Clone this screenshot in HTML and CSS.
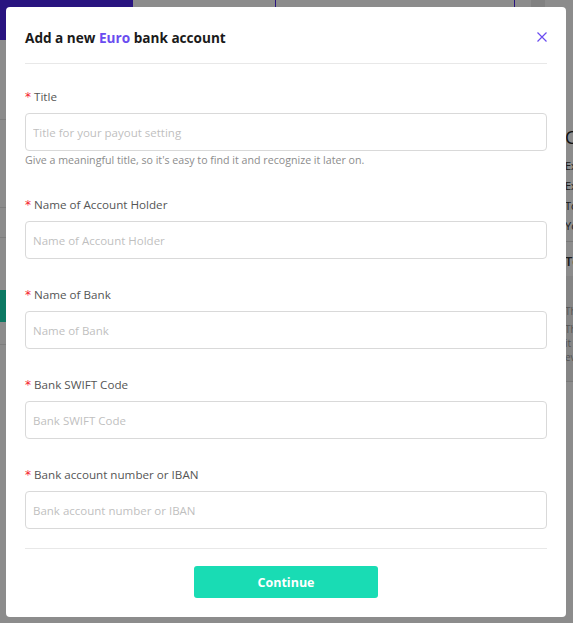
FILE: index.html
```html
<!DOCTYPE html>
<html>
<head>
<meta charset="utf-8">
<link rel="stylesheet" href="styles.css">
</head>
<body>
<div class="page">
  <div class="topbar">
    <div class="brand"></div>
    <div class="tab"></div>
    <div class="tab2"></div>
  </div>
  <div class="left">
    <div class="row r1"></div>
    <div class="row r2"></div>
    <div class="row r3"></div>
    <div class="greenbtn"></div>
    <div class="row r4"></div>
  </div>
  <div class="right">
    <div class="card">
      <div class="h">Co</div>
      <div class="list">
        <div class="t">Ex</div>
        <div class="t">Ex</div>
        <div class="t">To</div>
        <div class="t">Yo</div>
      </div>
      <div class="sep"></div>
      <div class="hb">To</div>
    </div>
    <div class="note">
      <div class="t">Th</div>
      <div class="t sm">Th</div>
      <div class="t sm">it</div>
      <div class="t sm">ev</div>
    </div>
  </div>
</div>
<div class="overlay"></div>
<div class="modal">
  <div class="modal-header">
    <h2 class="modal-title">Add a new <span class="accent">Euro</span> bank account</h2>
    <svg class="close" width="10" height="10" viewBox="0 0 10 10"><path d="M0.5 0.5L9.5 9.5M9.5 0.5L0.5 9.5" stroke="#6a4cf0" stroke-width="1.2" fill="none"/></svg>
  </div>
  <div class="modal-body">
    <div class="field">
      <label class="label"><span class="req">*</span>Title</label>
      <input class="input" placeholder="Title for your payout setting">
      <div class="help">Give a meaningful title, so it's easy to find it and recognize it later on.</div>
    </div>
    <div class="field">
      <label class="label"><span class="req">*</span>Name of Account Holder</label>
      <input class="input" placeholder="Name of Account Holder">
    </div>
    <div class="field">
      <label class="label"><span class="req">*</span>Name of Bank</label>
      <input class="input" placeholder="Name of Bank">
    </div>
    <div class="field">
      <label class="label"><span class="req">*</span>Bank SWIFT Code</label>
      <input class="input" placeholder="Bank SWIFT Code">
    </div>
    <div class="field">
      <label class="label"><span class="req">*</span>Bank account number or IBAN</label>
      <input class="input" placeholder="Bank account number or IBAN">
    </div>
  </div>
  <div class="modal-footer">
    <button class="btn">Continue</button>
  </div>
</div>
</body>
</html>
```
FILE: styles.css
```css
html, body {
  margin: 0;
  padding: 0;
}
body {
  width: 573px;
  height: 623px;
  overflow: hidden;
  font-family: "Open Sans", "Noto Sans", sans-serif;
  background: #f0f2f5;
  position: relative;
}
.page {
  display: grid;
  grid-template-columns: 200px 1fr 200px;
  grid-template-rows: 40px 1fr;
  height: 623px;
  background: #fff;
}
.topbar {
  grid-column: 1 / 4;
  display: flex;
  background: #fff;
}
.brand {
  width: 133px;
  background: #4c26e9;
}
.tab {
  margin-left: 142px;
  width: 238px;
  border-left: 1px solid #4c26e9;
  border-right: 1px solid #4c26e9;
}
.tab2 {
  margin-left: 16px;
  width: 14px;
  background: #ececec;
}
.left {
  grid-column: 1;
  display: flex;
  flex-direction: column;
  background: #fff;
}
.row { border-bottom: 1px solid #e6e6e6; }
.r1 { height: 79px; }
.r2 { height: 87px; }
.r3 { height: 29px; }
.greenbtn {
  margin-top: 52px;
  height: 32px;
  width: 60px;
  background: #19dcb4;
}
.r4 { height: 22px; }
.right {
  grid-column: 3;
  display: flex;
  flex-direction: column;
  align-items: flex-end;
  background: #fff;
}
.card {
  width: 8px;
  margin-top: 85px;
  overflow: hidden;
  white-space: nowrap;
  color: #333;
  font-size: 11px;
}
.card .h { font-size: 18px; line-height: 24px; color: #222; }
.card .list { padding-top: 7px; }
.card .t { line-height: 20px; height: 20px; }
.card .sep { border-top: 1px solid #ddd; margin-top: 5px; width: 200px; }
.card .hb { font-size: 13px; font-weight: 600; line-height: 30px; padding-top: 4px; }
.note {
  width: 8px;
  height: 106px;
  background: #f3f3f3;
  border-bottom: 1px solid #ddd;
  overflow: hidden;
  white-space: nowrap;
  color: #999;
  font-size: 10px;
  padding-top: 24px;
  box-sizing: border-box;
}
.note .t { line-height: 22px; height: 22px; }
.note .t.sm { line-height: 14px; height: 14px; }
.overlay {
  position: absolute;
  inset: 0;
  background: rgba(0, 0, 0, 0.45);
}
.modal {
  position: absolute;
  left: 6px;
  top: 7px;
  width: 560px;
  height: 610px;
  background: #fff;
  border-radius: 4px;
  box-sizing: border-box;
  padding: 0 19px;
  display: flex;
  flex-direction: column;
}
.modal-header {
  height: 57px;
  flex: none;
  box-sizing: border-box;
  padding-top: 4px;
  border-bottom: 1px solid #e8e8e8;
  display: flex;
  align-items: center;
  justify-content: space-between;
}
.modal-title {
  margin: 0;
  font-size: 13.6px;
  font-weight: 700;
  color: #1a1a1a;
}
.accent { color: #6a4cf0; }
.close { margin-right: 0; }
.modal-body {
  padding-top: 24px;
  display: flex;
  flex-direction: column;
  gap: 27px;
  border-bottom: 1px solid #e8e8e8;
  padding-bottom: 19px;
}
.field {
  display: flex;
  flex-direction: column;
}
.label {
  display: block;
  height: 20px;
  font-size: 11.65px;
  line-height: 18px;
  color: #555;
  margin-bottom: 5px;
}
.req {
  color: #f5222d;
  margin-right: 3px;
  font-family: "DejaVu Sans", sans-serif;
  font-size: 12px;
  line-height: 18px;
}
.input {
  height: 38px;
  box-sizing: border-box;
  border: 1px solid #d9d9d9;
  border-radius: 4px;
  padding: 0 7px;
  font-family: inherit;
  font-size: 11.5px;
  color: #333;
  outline: none;
}
.input::placeholder { color: #bfbfbf; }
.help {
  font-size: 10.65px;
  line-height: 17px;
  height: 17px;
  color: #8c8c8c;
  margin-top: 1px;
}
.modal-footer {
  display: flex;
  justify-content: center;
  padding-top: 17px;
}
.btn {
  width: 184px;
  height: 32px;
  background: #19dcb4;
  border: none;
  border-radius: 3px;
  color: #fff;
  font-family: inherit;
  font-weight: 700;
  font-size: 12.5px;
}
```
